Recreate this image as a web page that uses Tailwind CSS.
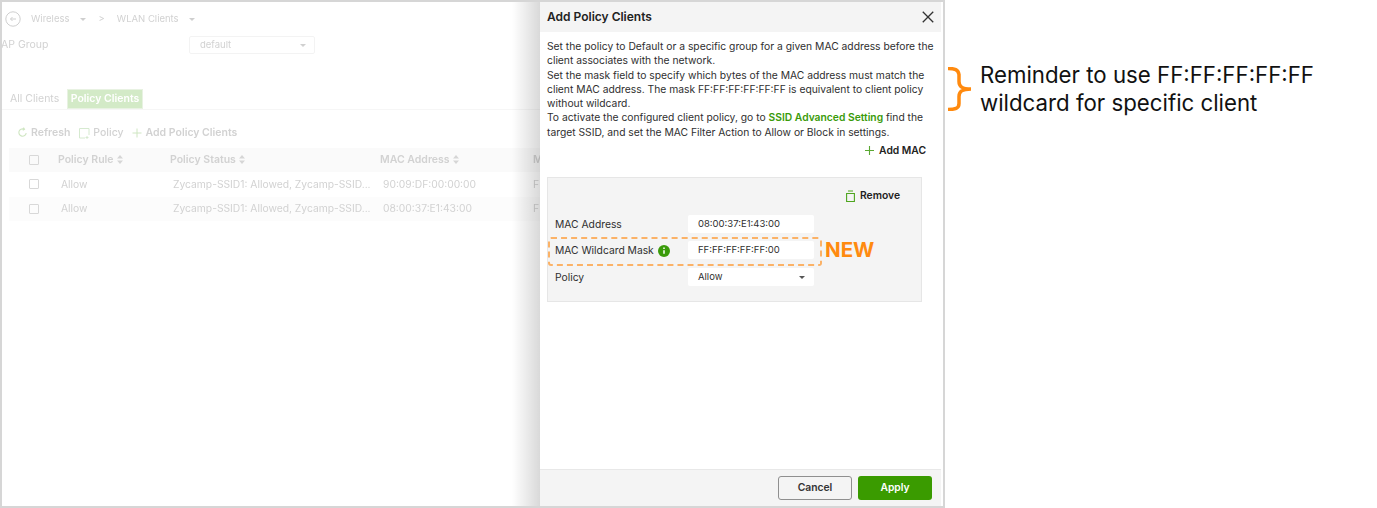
<!DOCTYPE html>
<html>
<head>
<meta charset="utf-8">
<script src="https://cdn.jsdelivr.net/npm/@tailwindcss/browser@4"></script>
</head>
<body class="bg-white font-['Inter',sans-serif]">
<div class="flex h-[508px] w-[1377px] overflow-hidden bg-white">
  <!-- app window -->
  <div class="relative flex h-[508px] w-[945px] shrink-0 border-2 border-[#d6d6d6] bg-white">
    <!-- faded page -->
    <div class="relative w-[538px] shrink-0 overflow-hidden">
      <div class="flex w-[700px] flex-col text-[#d2d2d2] blur-[0.5px]">
        <div class="flex h-[34px] items-center pl-[3px] text-[9.5px]">
          <svg class="h-4 w-4" viewBox="0 0 16 16" fill="none" stroke="#cfcfcf"><circle cx="8" cy="8" r="7.2"/><path d="M11 8H5.500M7.500 6 5.500 8l2 2"/></svg>
          <span class="ml-[10px]">Wireless</span>
          <span class="ml-[10px] h-0 w-0 border-x-[3px] border-t-[3px] border-x-transparent border-t-[#cfcfcf]"></span>
          <span class="ml-[13px]">&gt;</span>
          <span class="ml-[12px]">WLAN Clients</span>
          <span class="ml-[10px] h-0 w-0 border-x-[3px] border-t-[3px] border-x-transparent border-t-[#cfcfcf]"></span>
        </div>
        <div class="flex h-[18px] items-center text-[10.5px]">
          <span class="-ml-[1px] w-[188px]">AP Group</span>
          <div class="flex h-[18px] w-[126px] items-center justify-between rounded-[2px] border border-[#f3f3f3] pl-[10px] pr-[8px] text-[9.5px]">default<span class="h-0 w-0 border-x-[3.5px] border-t-[3.5px] border-x-transparent border-t-[#d0d0d0]"></span></div>
        </div>
        <div class="mt-[35px] flex h-[21px] items-stretch border-b border-[#f6f6f6] text-[10.5px]">
          <span class="flex w-[65px] items-center pl-2">All Clients</span>
          <span class="flex w-[76px] items-center justify-center border border-[#e8f2e2] bg-[#d3eac7] font-semibold text-white">Policy Clients</span>
        </div>
        <div class="flex h-[38px] items-center gap-[3px] pl-[15px] pt-[7px] text-[10.5px] font-semibold">
          <svg class="h-[11px] w-[11px]" viewBox="0 0 12 12" fill="none" stroke="#cfe6c2" stroke-width="1.2"><path d="M10 6.500A4 4 0 1 1 7.500 2.300M7 .7l1.200 1.800L6.300 3.500"/></svg>
          <span>Refresh</span>
          <svg class="ml-[5px] h-[12px] w-[12px]" viewBox="0 0 12 12" fill="none" stroke="#d6ead0"><path d="M7 11H1.500V1.500H11V8M9 9v3M7.500 10.500h3"/></svg>
          <span class="font-medium">Policy</span>
          <svg class="ml-[5px] h-[10px] w-[10px]" viewBox="0 0 10 10" stroke="#cfe6c2"><path d="M5 .5v9M.5 5h9"/></svg>
          <span class="ml-[1px]">Add Policy Clients</span>
        </div>
        <div class="ml-[7px] flex h-[24px] items-center bg-[#fafafa] pb-[1px] text-[10.5px] font-semibold">
          <span class="ml-[20px] h-[10px] w-[10px] rounded-[1px] border border-[#d8d8d8]"></span>
          <span class="ml-[19px] flex w-[112px] items-center gap-[3px]">Policy Rule
            <svg class="h-[9px] w-[6px]" viewBox="0 0 6 9" fill="#d6d6d6"><path d="M3 0l3 3.500H0zM3 9 0 5.500h6z"/></svg></span>
          <span class="flex w-[210px] items-center gap-[3px]">Policy Status
            <svg class="h-[9px] w-[6px]" viewBox="0 0 6 9" fill="#d6d6d6"><path d="M3 0l3 3.500H0zM3 9 0 5.500h6z"/></svg></span>
          <span class="flex w-[153px] items-center gap-[3px]">MAC Address
            <svg class="h-[9px] w-[6px]" viewBox="0 0 6 9" fill="#d6d6d6"><path d="M3 0l3 3.500H0zM3 9 0 5.500h6z"/></svg></span>
          <span>M</span>
        </div>
        <div class="ml-[7px] flex h-[24.5px] items-center text-[10.3px]">
          <span class="ml-[20px] h-[10px] w-[10px] rounded-[1px] border border-[#d8d8d8]"></span>
          <span class="ml-[22px] w-[112px]">Allow</span>
          <span class="w-[210px] whitespace-nowrap">Zycamp-SSID1: Allowed, Zycamp-SSID...</span>
          <span class="w-[150px]">90:09:DF:00:00:00</span>
          <span>F</span>
        </div>
        <div class="ml-[7px] flex h-[24.5px] items-center bg-[#fcfcfc] text-[10.3px]">
          <span class="ml-[20px] h-[10px] w-[10px] rounded-[1px] border border-[#d8d8d8]"></span>
          <span class="ml-[22px] w-[112px]">Allow</span>
          <span class="w-[210px] whitespace-nowrap">Zycamp-SSID1: Allowed, Zycamp-SSID...</span>
          <span class="w-[150px]">08:00:37:E1:43:00</span>
          <span>F</span>
        </div>
      </div>
      <div class="absolute inset-y-0 right-0 w-[28px] bg-gradient-to-r from-transparent to-black/15"></div>
    </div>
    <!-- drawer -->
    <div class="flex w-[401px] shrink-0 flex-col bg-white text-[10.3px] text-[#2f2f2f]">
      <div class="flex h-[30px] shrink-0 items-center justify-between bg-[#f4f4f4] pl-[7px] pr-[7px]">
        <span class="text-[12px] font-semibold text-[#222]">Add Policy Clients</span>
        <svg class="h-[12px] w-[12px]" viewBox="0 0 11 11" stroke="#333" stroke-width="1.2"><path d="M.7.7l9.600 9.600M10.300.7.7 10.300"/></svg>
      </div>
      <div class="px-[7px] pt-[7px] leading-[14.3px]">
        <p class="whitespace-nowrap">Set the policy to Default or a specific group for a given MAC address before the<br>client associates with the network.</p>
        <p class="whitespace-nowrap">Set the mask field to specify which bytes of the MAC address must match the<br>client MAC address. The mask FF:FF:FF:FF:FF:FF is equivalent to client policy<br>without wildcard.</p>
        <p class="whitespace-nowrap">To activate the configured client policy, go to <span class="font-semibold text-[#3a9b0a]">SSID Advanced Setting</span> find the<br>target SSID, and set the MAC Filter Action to Allow or Block in settings.</p>
      </div>
      <div class="flex items-center justify-end gap-[5px] pr-[15px] pt-[3.7px] font-semibold text-[#222]">
        <svg class="h-[9px] w-[9px]" viewBox="0 0 9 9" stroke="#5aa832" stroke-width="1.1"><path d="M4.500 0v9M0 4.500h9"/></svg>
        <span>Add MAC</span>
      </div>
      <div class="relative ml-[7px] mt-[19px] flex h-[125px] w-[375px] flex-col border border-[#e6e6e6] bg-[#f4f4f4] px-[7px]">
        <div class="flex h-[37px] items-center justify-end gap-[5px] pb-[2px] pr-[14px] font-semibold text-[#222]">
          <svg class="h-[12px] w-[9px]" viewBox="0 0 9 12" fill="none" stroke="#4ea51e" stroke-width="1.100"><path d="M.6 3.500h7.800v8H.6zM2 1h5"/></svg>
          <span>Remove</span>
        </div>
        <div class="flex h-[18px] items-center">
          <span class="w-[133px] pt-[1px]">MAC Address</span>
          <div class="flex h-[18px] w-[126px] items-center rounded-[2px] bg-white pl-[10px] text-[9.5px]">08:00:37:E1:43:00</div>
        </div>
        <div class="mt-[8px] flex h-[18px] items-center">
          <span class="flex w-[133px] items-center gap-[4px] pt-[1px]">MAC Wildcard Mask
            <svg class="h-[12px] w-[12px]" viewBox="0 0 12 12"><circle cx="6" cy="6" r="6" fill="#3a9b0a"/><path d="M6 5.200v3.600M6 2.600v1.300" stroke="#fff" stroke-width="1.500"/></svg>
          </span>
          <div class="flex h-[18px] w-[126px] items-center rounded-[2px] bg-white pl-[10px] text-[9.5px]">FF:FF:FF:FF:FF:00</div>
        </div>
        <div class="mt-[9px] flex h-[18px] items-center">
          <span class="w-[133px] pt-[1px]">Policy</span>
          <div class="flex h-[18px] w-[126px] items-center justify-between rounded-[2px] bg-white pl-[10px] pr-[9px] text-[9.5px]">Allow<span class="h-0 w-0 border-x-[3.5px] border-t-[3.5px] border-x-transparent border-t-[#555]"></span></div>
        </div>
        <!-- highlight annotation -->
        <div class="absolute left-[0px] top-[59px] h-[29px] w-[274px] rounded-[3px] border-[2.5px] border-dashed border-[#fbb267]"></div>
        <span class="absolute left-[277px] top-[60px] text-[20.5px] font-bold leading-[24px] text-[#ff8a0f]">NEW</span>
      </div>
      <div class="mt-auto flex h-[37px] shrink-0 items-center justify-end gap-[6px] border-t border-[#e8e8e8] bg-[#f4f4f4] pr-[9px]">
        <div class="flex h-[24px] w-[74px] items-center justify-center rounded-[3px] border border-[#8f8f8f] font-semibold text-[#333]">Cancel</div>
        <div class="flex h-[24px] w-[74px] items-center justify-center rounded-[3px] bg-[#3a9b00] font-semibold text-white">Apply</div>
      </div>
    </div>
  </div>
  <!-- reminder -->
  <div class="flex h-[508px] items-start pt-[61px]">
    <svg class="ml-[2px] mt-[6px] h-[44px] w-[26px]" viewBox="0 0 26 44" fill="none" stroke="#ff8a0f" stroke-width="3.500"><path d="M1 1.500c7 0 10 1 11 6v7c0 5 3 7.500 12 7.500-9 0-12 2.500-12 7.500v7c0 5-4 6-11 6"/></svg>
    <p class="ml-[7px] whitespace-nowrap text-[22.25px] leading-[28px] text-[#111]">Reminder to use FF:FF:FF:FF:FF<br>wildcard for specific client</p>
  </div>
</div>
</body>
</html>
